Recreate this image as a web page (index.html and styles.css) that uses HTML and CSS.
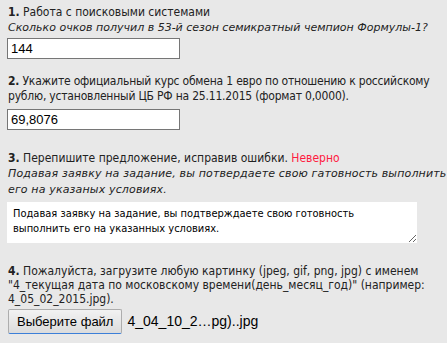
FILE: index.html
```html
<!DOCTYPE html>
<html lang="ru">
<head>
    <meta charset="UTF-8">
    <title>Задания</title>
    <link rel="stylesheet" href="styles.css">
</head>
<body>
    <form class="quiz">
        <div class="task">
            <p class="title"><b>1.</b> Работа с поисковыми системами</p>
            <p class="hint">Сколько очков получил в 53-й сезон семикратный чемпион Формулы-1?</p>
            <input type="text" class="field" value="144">
        </div>

        <div class="task task-long">
            <p class="title title-narrow"><b>2.</b> Укажите официальный курс обмена 1 евро по отношению к российскому рублю, установленный ЦБ РФ на 25.11.2015 (формат 0,0000).</p>
            <input type="text" class="field" value="69,8076">
        </div>

        <div class="task task-long">
            <p class="title"><b>3.</b> Перепишите предложение, исправив ошибки. <span class="wrong">Неверно</span></p>
            <p class="hint">Подавая заявку на задание, вы потвердаете свою гатовность выполнить его на указаных условиях.</p>
            <textarea class="answer">Подавая заявку на задание, вы подтверждаете свою готовность выполнить его на указанных условиях.</textarea>
        </div>

        <div class="task">
            <p class="title title-tight"><b>4.</b> Пожалуйста, загрузите любую картинку (jpeg, gif, png, jpg) с именем "4_текущая дата по московскому времени(день_месяц_год)" (например: 4_05_02_2015.jpg).</p>
            <div class="upload">
                <button type="button" class="file-btn">Выберите файл</button>
                <span class="file-name">4_04_10_2…pg)..jpg</span>
            </div>
        </div>
    </form>
</body>
</html>
```

FILE: styles.css
```css
html, body {
    overflow: hidden;
}

body {
    margin: 0;
    background-color: #e8e8e8;
    color: #222;
    font-family: "DejaVu Sans Condensed", "DejaVu Sans", sans-serif;
    font-size: 12px;
    line-height: 15px;
}

.quiz {
    width: 454px;
    padding: 5px 8px;
}

.task {
    margin-bottom: 15px;
}

.task-long {
    margin-bottom: 21px;
}

.title, .hint {
    margin: 0;
}

.title-narrow {
    letter-spacing: -0.2px;
}

.title-tight {
    line-height: 14px;
}

.hint {
    font-family: "DejaVu Sans", sans-serif;
    font-size: 11px;
    font-style: italic;
}

.task-long .hint {
    line-height: 16px;
    letter-spacing: 0.15px;
}

.wrong {
    color: #ff1a40;
}

.field {
    display: block;
    box-sizing: border-box;
    width: 173px;
    height: 21px;
    margin: 3px 0 0 -1px;
    padding: 1px 3px;
    border: 1px solid #767676;
    background: white;
    font-family: "Liberation Sans", Arial, sans-serif;
    font-size: 13px;
    color: #000;
}

.task-long .field {
    margin-top: 5px;
}

.answer {
    display: block;
    box-sizing: border-box;
    width: 410px;
    height: 41px;
    margin: 4px 0 0 -1px;
    padding: 4px 6px;
    border: none;
    background: white;
    resize: both;
    font-family: "DejaVu Sans Condensed", "DejaVu Sans", sans-serif;
    font-size: 11px;
    line-height: 15px;
    color: #000;
}

.upload {
    display: flex;
    align-items: center;
    gap: 5px;
    margin-top: 3px;
}

.file-btn {
    height: 25px;
    padding: 0 8px;
    border: 1px solid #adadad;
    border-bottom-color: #3c7fd8;
    border-radius: 2px;
    background: linear-gradient(#f2f2f2, #dcdcdc);
    font-family: "Liberation Sans", Arial, sans-serif;
    font-size: 13px;
    color: #000;
}

.file-name {
    font-family: "Liberation Sans", Arial, sans-serif;
    font-size: 14px;
    color: #000;
}
```
